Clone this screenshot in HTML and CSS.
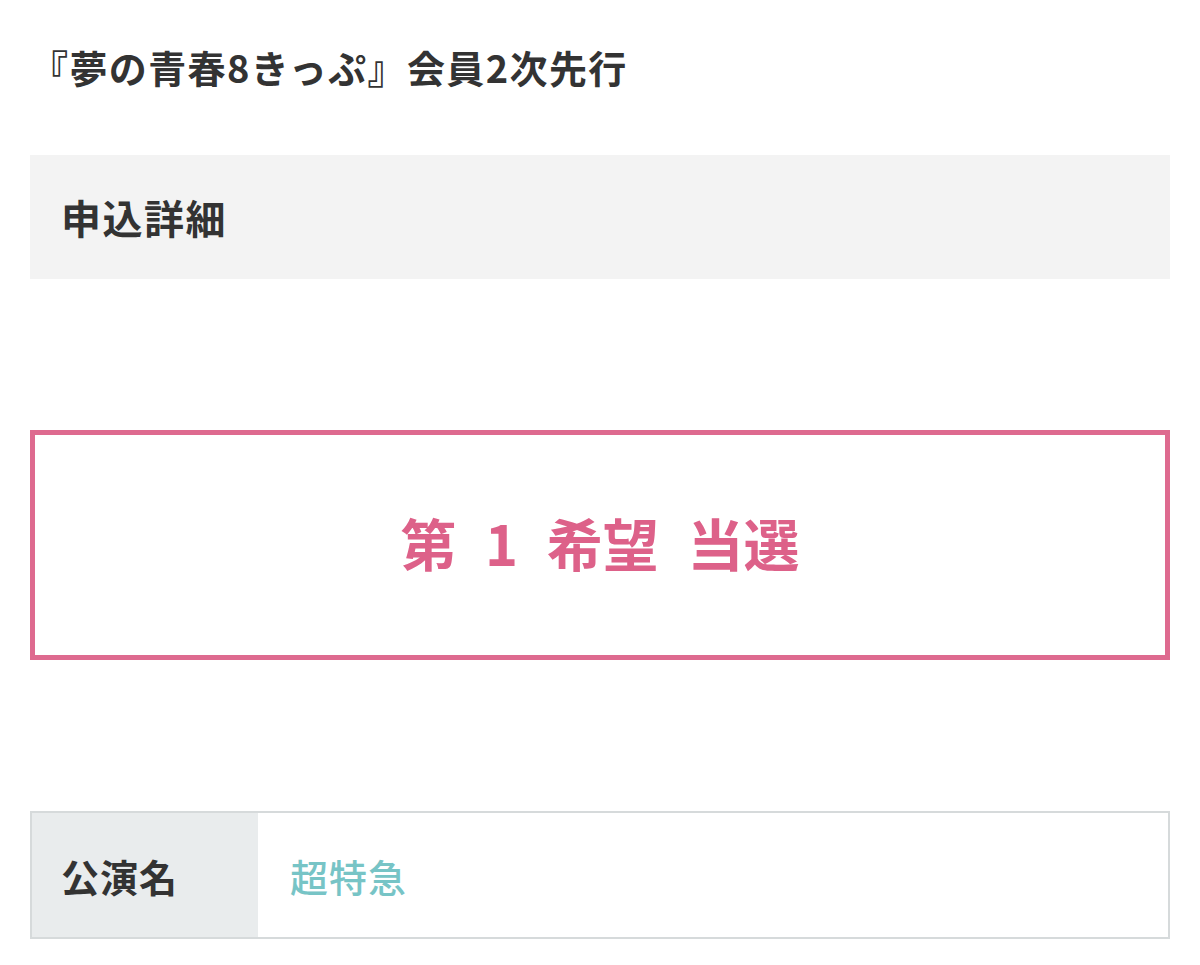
FILE: index.html
```html
<!DOCTYPE html>
<html lang="ja">
<head>
<meta charset="utf-8">
<title>申込詳細</title>
<link rel="stylesheet" href="styles.css">
</head>
<body>
<main class="page">
  <h1 class="title">『夢の青春8きっぷ』会員2次先行</h1>
  <section class="section-head">
    <h2 class="section-title">申込詳細</h2>
  </section>
  <div class="result">
    <p class="result-text">第 1 希望 当選</p>
  </div>
  <div class="detail">
    <div class="detail-label">公演名</div>
    <div class="detail-value">超特急</div>
  </div>
</main>
</body>
</html>
```
FILE: styles.css
```css
html, body {
  margin: 0;
  padding: 0;
  background: #ffffff;
}

body {
  font-family: "Noto Sans CJK JP", "Noto Sans", sans-serif;
  color: #333333;
}

.page {
  padding: 38px 30px 0 30px;
}

.title {
  margin: 0;
  font-size: 38px;
  line-height: 57px;
  font-weight: 700;
  letter-spacing: 1.4px;
  color: #333333;
}

.section-head {
  margin-top: 60px;
  background: #f3f3f3;
  height: 124px;
  display: flex;
  align-items: center;
  padding-left: 31px;
}

.section-title {
  margin: 0;
  font-size: 40px;
  line-height: 1;
  font-weight: 700;
  letter-spacing: 1.5px;
  color: #333333;
}

.result {
  margin-top: 151px;
  height: 230px;
  box-sizing: border-box;
  border: 5px solid #de6a8f;
  display: flex;
  align-items: center;
  justify-content: center;
}

.result-text {
  margin: 0;
  font-size: 56px;
  line-height: 1;
  font-weight: 700;
  word-spacing: 16px;
  color: #dd6189;
  transform: translateY(-3px);
}

.detail {
  margin-top: 151px;
  display: grid;
  grid-template-columns: 226px 1fr;
  height: 128px;
  box-sizing: border-box;
  border: 2px solid #d6dadb;
}

.detail-label {
  background: #e9eced;
  display: flex;
  align-items: center;
  padding-left: 29px;
  font-size: 38px;
  font-weight: 700;
  letter-spacing: 1px;
  color: #333333;
}

.detail-value {
  display: flex;
  align-items: center;
  padding-left: 32px;
  font-size: 38px;
  font-weight: 500;
  letter-spacing: 1px;
  color: #77c4c6;
}
```
